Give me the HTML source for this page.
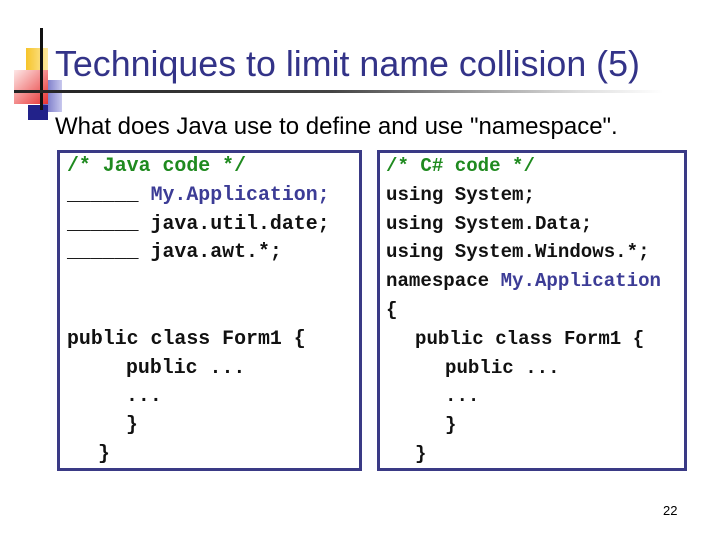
<!DOCTYPE html>
<html><head><style>
body{margin:0;width:720px;height:540px;background:#fff;position:relative;overflow:hidden;font-family:"Liberation Sans",sans-serif}
.a{position:absolute}
.code{position:absolute;font-family:"Liberation Mono",monospace;font-weight:bold;font-size:19.1px;line-height:28.8px;color:#111;white-space:pre}
.box{position:absolute;border:3px solid #3a3a85;box-sizing:border-box}
.g{color:#1f8a1f}.p{color:#3c3c96}
.i{display:inline-block}
</style></head><body>
<div class="a" style="left:26px;top:48px;width:22px;height:32px;background:linear-gradient(90deg,#f6c42a,#fde9a0)"></div>
<div class="a" style="left:40px;top:80px;width:22px;height:32px;background:linear-gradient(90deg,#5a5ab8,#c8c8ee)"></div>
<div class="a" style="left:14px;top:70px;width:34px;height:34px;background:linear-gradient(135deg,#fde8e8,#e83030)"></div>
<div class="a" style="left:28px;top:105px;width:20px;height:15px;background:#22228a"></div>
<div class="a" style="left:40px;top:28px;width:3px;height:82px;background:#111"></div>
<div class="a" style="left:14px;top:90px;width:706px;height:3px;background:linear-gradient(90deg,#222 0%,#444 45%,#ddd 80%,#fff 92%)"></div>
<div class="a" style="left:55px;top:44px;font-size:35.8px;color:#333388">Techniques to limit name collision (5)</div>
<div class="a" style="left:55px;top:113px;font-size:24px;color:#000">What does Java use to define and use "namespace".</div>
<div class="box" style="left:57px;top:150px;width:305px;height:321px"></div>
<div class="box" style="left:377px;top:150px;width:310px;height:321px"></div>
<div class="code" style="left:67px;top:152px;font-size:19.9px"><span class="g">/* Java code */</span>
______ <span class="p">My.Application;</span>
______ java.util.date;
______ java.awt.*;


public class Form1 {
<span class="i" style="width:59px"></span>public ...
<span class="i" style="width:59px"></span>...
<span class="i" style="width:59px"></span>}
<span class="i" style="width:31px"></span>}</div>
<div class="code" style="left:386px;top:152px"><span class="g">/* C# code */</span>
using System;
using System.Data;
using System.Windows.*;
namespace <span class="p">My.Application</span>
{
<span class="i" style="width:29px"></span>public class Form1 {
<span class="i" style="width:59px"></span>public ...
<span class="i" style="width:59px"></span>...
<span class="i" style="width:59px"></span>}
<span class="i" style="width:29px"></span>}</div>
<div class="a" style="left:663px;top:503px;font-size:13px">22</div>
</body></html>
